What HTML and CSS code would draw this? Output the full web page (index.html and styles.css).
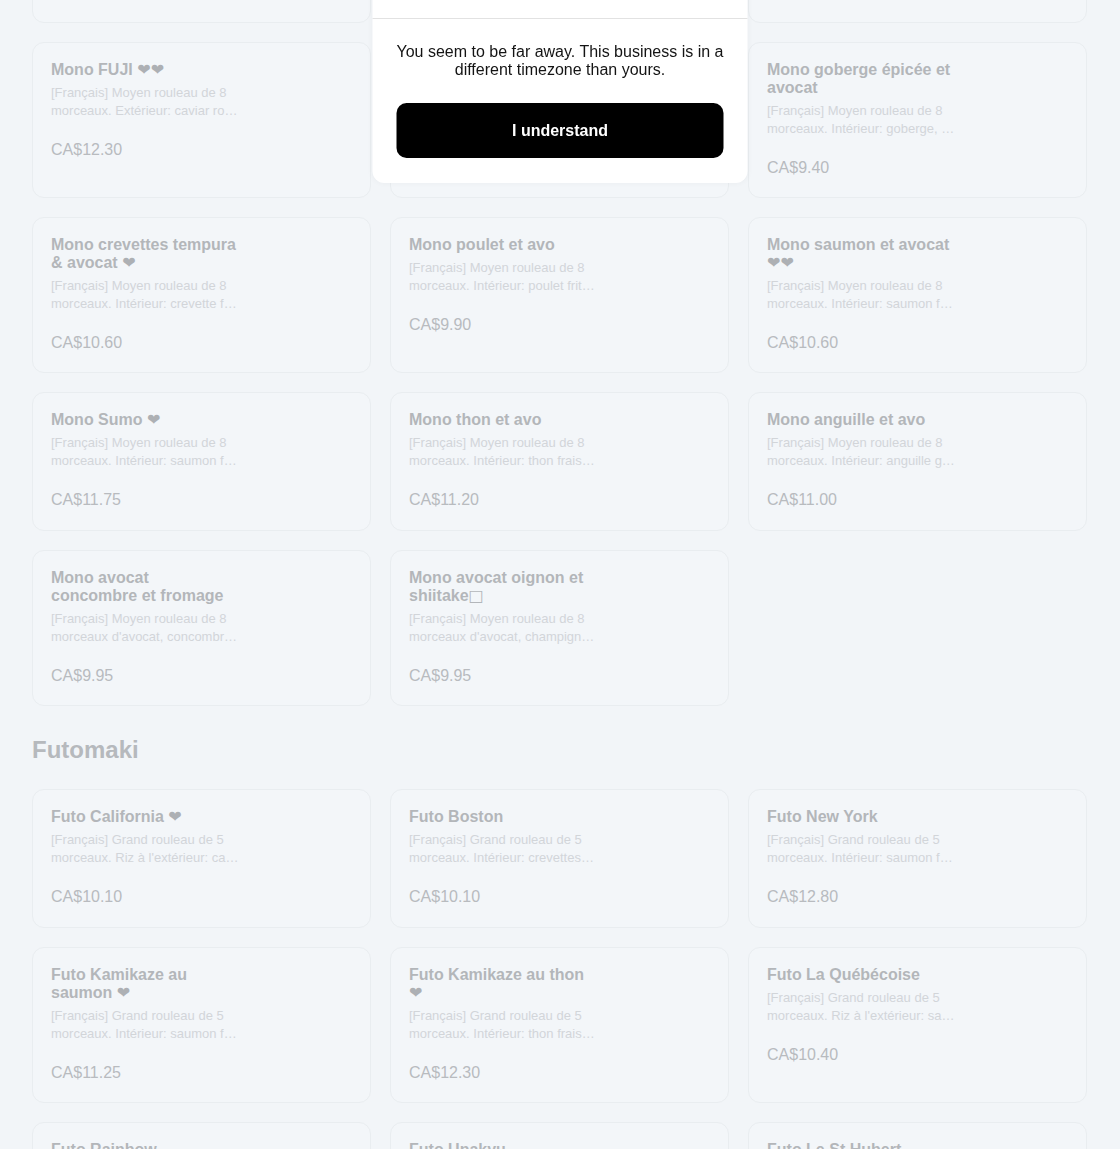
FILE: index.html
```html
<!DOCTYPE html>
<html lang="fr">
<head>
<meta charset="utf-8">
<title>Menu</title>
<link rel="stylesheet" href="styles.css">
</head>
<body>
<main class="menu">
  <section class="category">
    <div class="grid">
      <article class="card"><div class="info"><h3 class="title">Mono California</h3><p class="desc">[Français] Moyen rouleau de 8 morceaux. Intérieur: goberge, …</p><p class="price">CA$8.90</p></div></article>
      <article class="card"><div class="info"><h3 class="title">Mono Boston</h3><p class="desc">[Français] Moyen rouleau de 8 morceaux. Intérieur: crevettes…</p><p class="price">CA$9.40</p></div></article>
      <article class="card"><div class="info"><h3 class="title">Mono New York</h3><p class="desc">[Français] Moyen rouleau de 8 morceaux. Intérieur: saumon f…</p><p class="price">CA$10.60</p></div></article>

      <article class="card"><div class="info"><h3 class="title">Mono FUJI <span class="heart">❤❤</span></h3><p class="desc">[Français] Moyen rouleau de 8 morceaux. Extérieur: caviar ro…</p><p class="price">CA$12.30</p></div></article>
      <article class="card"><div class="info"><h3 class="title">Mono saumon épicé</h3><p class="desc">[Français] Moyen rouleau de 8 morceaux. Intérieur: saumon f…</p><p class="price">CA$10.60</p></div></article>
      <article class="card"><div class="info"><h3 class="title">Mono goberge épicée et avocat</h3><p class="desc">[Français] Moyen rouleau de 8 morceaux. Intérieur: goberge, …</p><p class="price">CA$9.40</p></div></article>

      <article class="card"><div class="info"><h3 class="title">Mono crevettes tempura &amp; avocat <span class="heart">❤</span></h3><p class="desc">[Français] Moyen rouleau de 8 morceaux. Intérieur: crevette f…</p><p class="price">CA$10.60</p></div></article>
      <article class="card"><div class="info"><h3 class="title">Mono poulet et avo</h3><p class="desc">[Français] Moyen rouleau de 8 morceaux. Intérieur: poulet frit…</p><p class="price">CA$9.90</p></div></article>
      <article class="card"><div class="info"><h3 class="title">Mono saumon et avocat <span class="heart">❤❤</span></h3><p class="desc">[Français] Moyen rouleau de 8 morceaux. Intérieur: saumon f…</p><p class="price">CA$10.60</p></div></article>

      <article class="card"><div class="info"><h3 class="title">Mono Sumo <span class="heart">❤</span></h3><p class="desc">[Français] Moyen rouleau de 8 morceaux. Intérieur: saumon f…</p><p class="price">CA$11.75</p></div></article>
      <article class="card"><div class="info"><h3 class="title">Mono thon et avo</h3><p class="desc">[Français] Moyen rouleau de 8 morceaux. Intérieur: thon frais…</p><p class="price">CA$11.20</p></div></article>
      <article class="card"><div class="info"><h3 class="title">Mono anguille et avo</h3><p class="desc">[Français] Moyen rouleau de 8 morceaux. Intérieur: anguille g…</p><p class="price">CA$11.00</p></div></article>

      <article class="card"><div class="info"><h3 class="title">Mono avocat concombre et fromage</h3><p class="desc">[Français] Moyen rouleau de 8 morceaux d'avocat, concombr…</p><p class="price">CA$9.95</p></div></article>
      <article class="card"><div class="info"><h3 class="title">Mono avocat oignon et shiitake<span class="tofu">□</span></h3><p class="desc">[Français] Moyen rouleau de 8 morceaux d'avocat, champign…</p><p class="price">CA$9.95</p></div></article>
    </div>
  </section>

  <section class="category">
    <h2 class="cat-title">Futomaki</h2>
    <div class="grid">
      <article class="card"><div class="info"><h3 class="title">Futo California <span class="heart">❤</span></h3><p class="desc">[Français] Grand rouleau de 5 morceaux. Riz à l'extérieur: ca…</p><p class="price">CA$10.10</p></div></article>
      <article class="card"><div class="info"><h3 class="title">Futo Boston</h3><p class="desc">[Français] Grand rouleau de 5 morceaux. Intérieur: crevettes…</p><p class="price">CA$10.10</p></div></article>
      <article class="card"><div class="info"><h3 class="title">Futo New York</h3><p class="desc">[Français] Grand rouleau de 5 morceaux. Intérieur: saumon f…</p><p class="price">CA$12.80</p></div></article>

      <article class="card"><div class="info"><h3 class="title">Futo Kamikaze au saumon <span class="heart">❤</span></h3><p class="desc">[Français] Grand rouleau de 5 morceaux. Intérieur: saumon f…</p><p class="price">CA$11.25</p></div></article>
      <article class="card"><div class="info"><h3 class="title">Futo Kamikaze au thon <span class="heart">❤</span></h3><p class="desc">[Français] Grand rouleau de 5 morceaux. Intérieur: thon frais…</p><p class="price">CA$12.30</p></div></article>
      <article class="card"><div class="info"><h3 class="title">Futo La Québécoise</h3><p class="desc">[Français] Grand rouleau de 5 morceaux. Riz à l'extérieur: sa…</p><p class="price">CA$10.40</p></div></article>

      <article class="card"><div class="info"><h3 class="title">Futo Rainbow</h3><p class="desc">[Français] Grand rouleau de 5 morceaux. Extérieur: saumon, t…</p><p class="price">CA$13.50</p></div></article>
      <article class="card"><div class="info"><h3 class="title">Futo Unakyu</h3><p class="desc">[Français] Grand rouleau de 5 morceaux. Intérieur: anguille g…</p><p class="price">CA$12.30</p></div></article>
      <article class="card"><div class="info"><h3 class="title">Futo Le St Hubert</h3><p class="desc">[Français] Grand rouleau de 5 morceaux. Intérieur: poulet frit…</p><p class="price">CA$11.50</p></div></article>
    </div>
  </section>
</main>

<div class="overlay"></div>
<div class="modal" role="dialog">
  <div class="modal-head"></div>
  <div class="modal-body">
    <p class="modal-text">You seem to be far away. This business is in a different timezone than yours.</p>
    <button class="modal-btn" type="button">I understand</button>
  </div>
</div>
</body>
</html>
```

FILE: styles.css
```css
* { box-sizing: border-box; }

html, body {
  margin: 0;
  padding: 0;
  background: #f2f5f8;
  font-family: "Liberation Sans", "DejaVu Sans", Arial, sans-serif;
}

.menu {
  padding: 0 33px 40px 32px;
  margin-top: -116px;
}

.grid {
  display: grid;
  grid-template-columns: repeat(3, 1fr);
  column-gap: 19px;
  row-gap: 19px;
}

.card {
  background: #f3f6f9;
  border: 1px solid #e9edf0;
  border-radius: 12px;
  padding: 18px 18px 20px;
  min-height: 139px;
}

.info {
  display: flex;
  flex-direction: column;
}

.title {
  margin: 0;
  max-width: 186px;
  font-size: 16px;
  line-height: 18px;
  font-weight: 700;
  color: #b3b6ba;
}

.heart {
  font-family: "DejaVu Sans", sans-serif;
  font-weight: 400;
  font-size: 16px;
  line-height: 18px;
  color: #adb0b4;
}

.tofu {
  font-family: "DejaVu Sans", sans-serif;
  font-weight: 400;
  font-size: 16px;
  line-height: 18px;
}

.desc {
  margin: 5px 0 0;
  max-width: 200px;
  font-size: 13px;
  line-height: 18px;
  color: #d2d5d9;
}

.price {
  margin: 20px 0 0;
  font-size: 16px;
  line-height: 19px;
  color: #b8bbbf;
}

.cat-title {
  margin: 30px 0 25px;
  font-size: 24px;
  line-height: 28px;
  font-weight: 700;
  color: #b6b9bd;
}

.overlay {
  position: fixed;
  inset: 0;
  background: rgba(255, 255, 255, 0);
  pointer-events: none;
}

.modal {
  position: fixed;
  top: -39px;
  left: 50%;
  transform: translateX(-50%);
  width: 375px;
  background: #ffffff;
  border-radius: 12px;
  box-shadow: 0 0 6px rgba(0, 0, 0, 0.04);
}

.modal-head {
  height: 58px;
  border-bottom: 1px solid #e2e2e2;
}

.modal-body {
  padding: 24px 24px 25px;
}

.modal-text {
  margin: 0 0 24px;
  font-size: 16px;
  line-height: 18px;
  text-align: center;
  color: #141414;
}

.modal-btn {
  display: block;
  width: 100%;
  height: 55px;
  border: 0;
  border-radius: 10px;
  background: #000000;
  color: #ffffff;
  font-family: "Liberation Sans", Arial, sans-serif;
  font-size: 16px;
  font-weight: 700;
}
```
